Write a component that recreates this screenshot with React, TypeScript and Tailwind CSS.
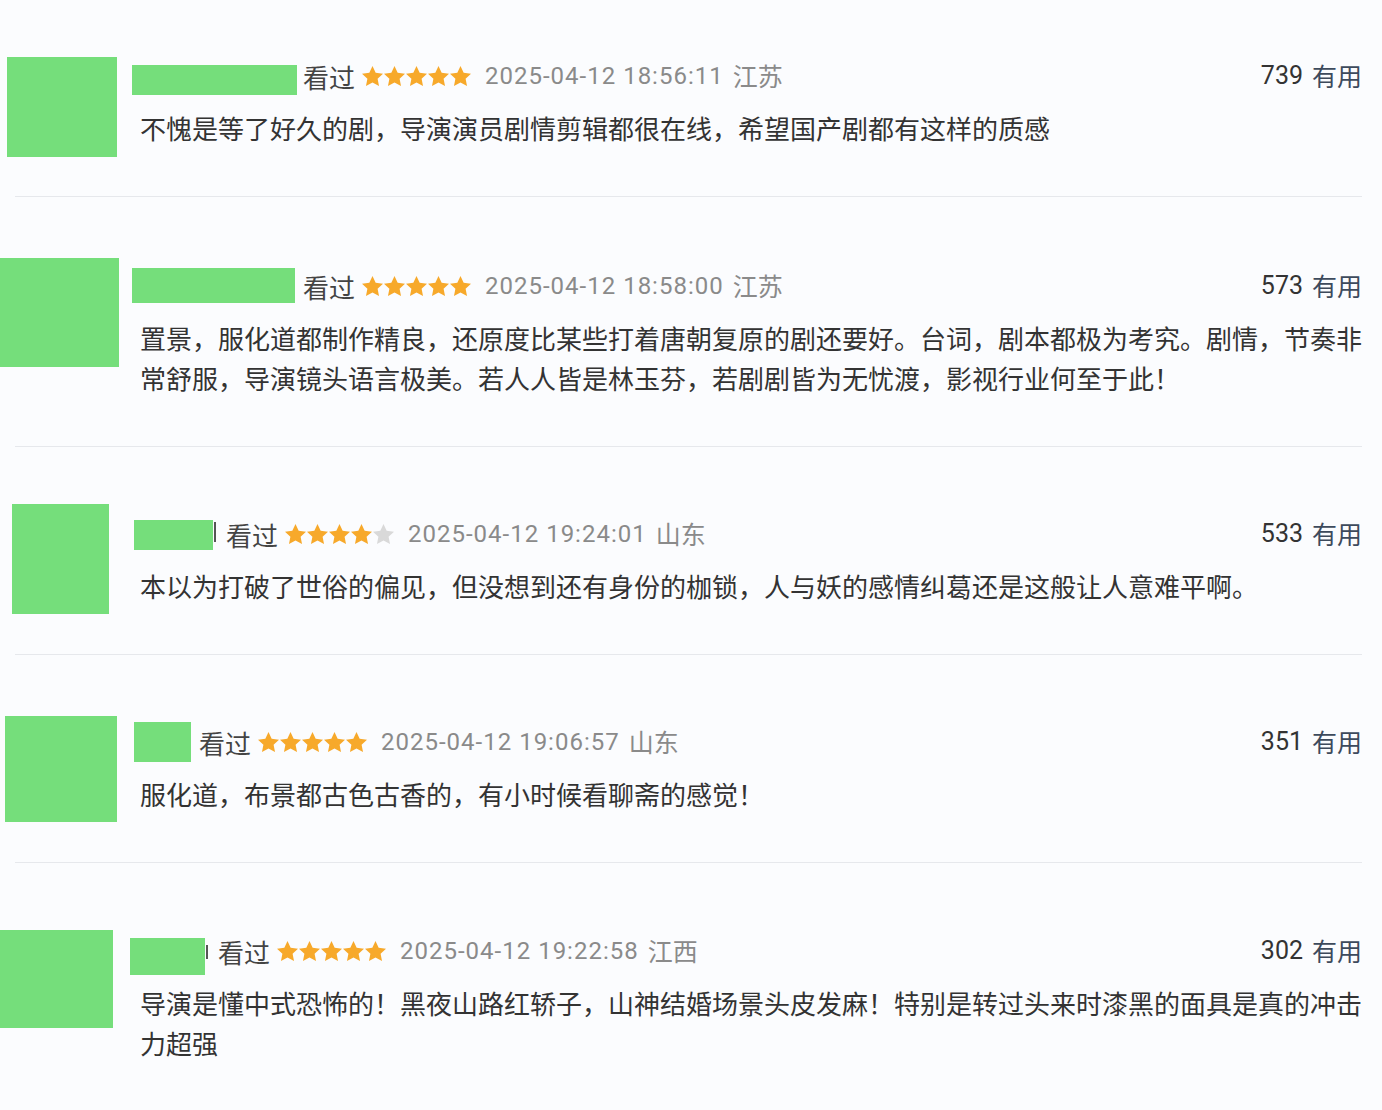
import React from "react";

type Review = {
  rowPad: string;
  avatar: string;
  nameBox: string;
  frag?: string;
  seenGap: string;
  stars: number;
  time: string;
  region: string;
  useful: number;
  lines: string[];
};

const REVIEWS: Review[] = [
  {
    rowPad: "pt-[56px]",
    avatar: "mt-[57px] ml-[7px] w-[110px] h-[100px]",
    nameBox: "ml-[2px] w-[165px] h-[30px] mt-[9px]",
    seenGap: "ml-[6px]",
    stars: 5,
    time: "2025-04-12 18:56:11",
    region: "江苏",
    useful: 739,
    lines: ["不愧是等了好久的剧，导演演员剧情剪辑都很在线，希望国产剧都有这样的质感"],
  },
  {
    rowPad: "pt-[69px]",
    avatar: "mt-[61px] ml-[0px] w-[119px] h-[109px]",
    nameBox: "ml-[2px] w-[163px] h-[35px] mt-[2px]",
    seenGap: "ml-[8px]",
    stars: 5,
    time: "2025-04-12 18:58:00",
    region: "江苏",
    useful: 573,
    lines: [
      "置景，服化道都制作精良，还原度比某些打着唐朝复原的剧还要好。台词，剧本都极为考究。剧情，节奏非",
      "常舒服，导演镜头语言极美。若人人皆是林玉芬，若剧剧皆为无忧渡，影视行业何至于此！",
    ],
  },
  {
    rowPad: "pt-[67px]",
    avatar: "mt-[57px] ml-[12px] w-[97px] h-[110px]",
    nameBox: "ml-[4px] w-[79px] h-[30px] mt-[6px]",
    frag: "w-[2px] h-[20px] mt-[8px] ml-[1px]",
    seenGap: "ml-[10px]",
    stars: 4,
    time: "2025-04-12 19:24:01",
    region: "山东",
    useful: 533,
    lines: ["本以为打破了世俗的偏见，但没想到还有身份的枷锁，人与妖的感情纠葛还是这般让人意难平啊。"],
  },
  {
    rowPad: "pt-[67px]",
    avatar: "mt-[61px] ml-[5px] w-[112px] h-[106px]",
    nameBox: "ml-[4px] w-[57px] h-[40px] mt-[0px]",
    seenGap: "ml-[8px]",
    stars: 5,
    time: "2025-04-12 19:06:57",
    region: "山东",
    useful: 351,
    lines: ["服化道，布景都古色古香的，有小时候看聊斋的感觉！"],
  },
  {
    rowPad: "pt-[68px]",
    avatar: "mt-[67px] ml-[0px] w-[113px] h-[98px]",
    nameBox: "ml-[0px] w-[75px] h-[37px] mt-[7px]",
    frag: "w-[2px] h-[14px] mt-[14px] ml-[1px]",
    seenGap: "ml-[10px]",
    stars: 5,
    time: "2025-04-12 19:22:58",
    region: "江西",
    useful: 302,
    lines: [
      "导演是懂中式恐怖的！黑夜山路红轿子，山神结婚场景头皮发麻！特别是转过头来时漆黑的面具是真的冲击",
      "力超强",
    ],
  },
];

function Star({ on }: { on: boolean }) {
  return (
    <svg viewBox="1.7 1.8 20.6 19.6" className="w-[21px] h-[20px]">
      <path
        d="M12 1.8l3.1 6.6 7.2.9-5.3 5 1.4 7.1L12 17.9l-6.4 3.5 1.4-7.1-5.3-5 7.2-.9L12 1.8z"
        fill={on ? "#f7a92b" : "#d9d9d9"}
      />
    </svg>
  );
}

function ReviewRow({ r }: { r: Review }) {
  return (
    <div className="flex">
      {/* avatar */}
      <div className="w-[130px] shrink-0">
        <div className={`${r.avatar} bg-[#75de7b]`} />
      </div>

      <div className={`flex-1 pr-[20px] pb-[48px] ${r.rowPad}`}>
        {/* header */}
        <div className="flex h-[40px] items-start">
          <div className={`${r.nameBox} shrink-0 bg-[#75de7b]`} />
          {r.frag && <div className={`${r.frag} shrink-0 bg-[#555]`} />}
          <div className={`${r.seenGap} flex h-[40px] items-center`}>
            <span className="text-[26px] text-[#444]">看过</span>
            <span className="ml-[7px] flex gap-px">
              {[0, 1, 2, 3, 4].map((i) => (
                <Star key={i} on={i < r.stars} />
              ))}
            </span>
            <span className="ml-[14px] font-['Roboto'] text-[24px] tracking-[1px] text-[#8a8a8a]">
              {r.time}
            </span>
            <span className="ml-[9px] text-[25px] text-[#8a8a8a]">{r.region}</span>
          </div>
          <div className="ml-auto flex h-[40px] items-center">
            <span className="font-['Roboto'] text-[25px] text-[#333]">{r.useful}</span>
            <span className="ml-[9px] text-[25px] text-[#3d4a5c]">有用</span>
          </div>
        </div>

        {/* body */}
        <div className="mt-[12px] pl-[10px] text-[26px] leading-[40px] text-[#333]">
          {r.lines.map((l, i) => (
            <div key={i} className="whitespace-nowrap">
              {l}
            </div>
          ))}
        </div>
      </div>
    </div>
  );
}

export default function App() {
  return (
    <div className="min-h-screen w-[1382px] overflow-hidden bg-[#fbfcfe] font-['Noto_Sans_CJK_SC',sans-serif]">
      {REVIEWS.map((r, i) => (
        <div key={i}>
          <ReviewRow r={r} />
          {i < REVIEWS.length - 1 && <div className="ml-[15px] mr-[20px] h-px bg-[#e6e8ec]" />}
        </div>
      ))}
    </div>
  );
}
